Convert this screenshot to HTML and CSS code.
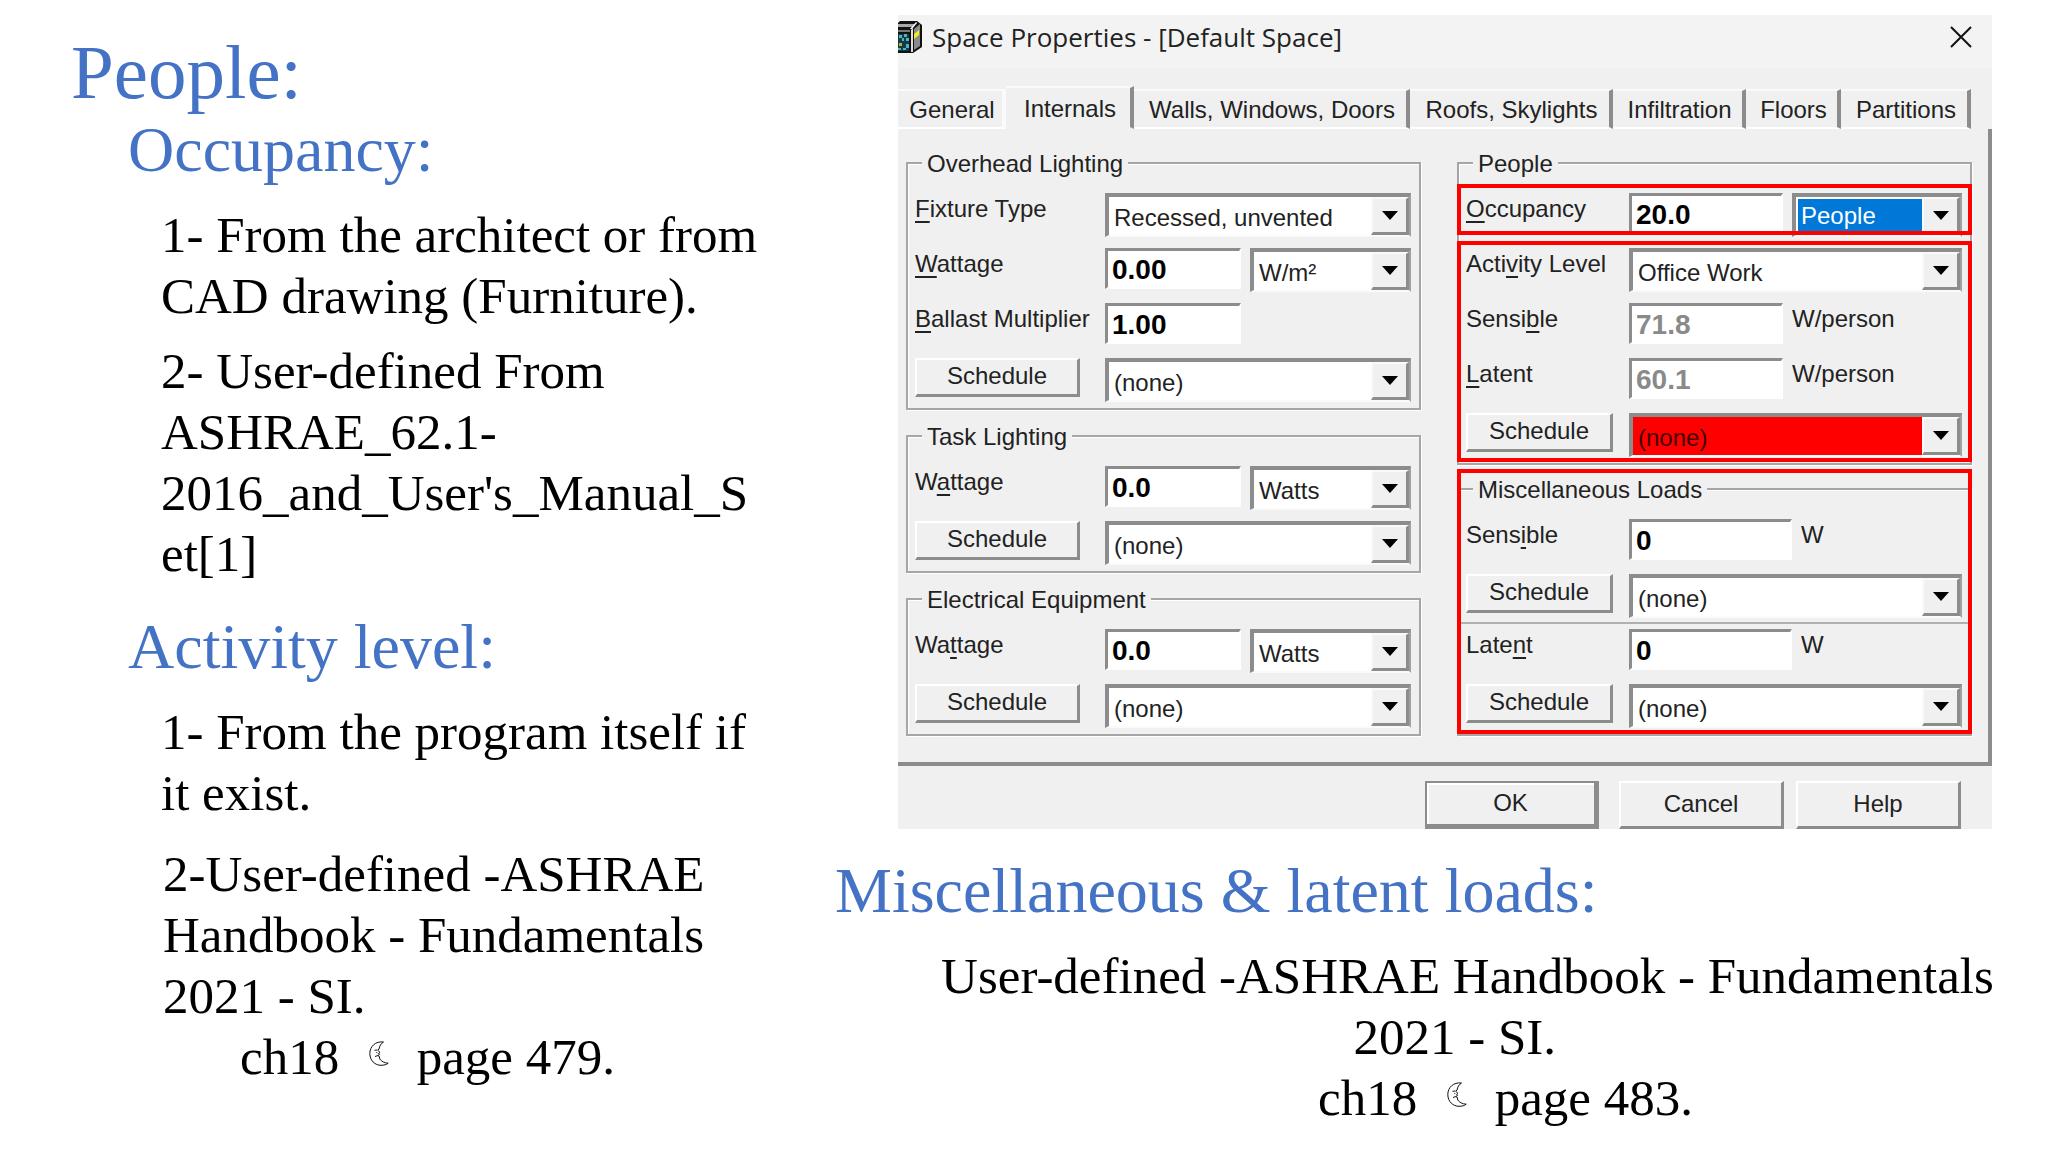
FILE: index.html
```html
<!DOCTYPE html>
<html lang="en">
<head>
    <meta charset="UTF-8">
    <meta name="viewport" content="width=device-width, initial-scale=1.0">
    <title>People and Miscellaneous Loads</title>
    <link rel="stylesheet" href="styles.css">
</head>
<body>
    <!-- Shared moon symbol -->
    <svg class="defs" width="0" height="0" aria-hidden="true">
        <symbol id="moon" viewBox="0 0 20 25">
            <path d="M14.500 1C6.500 0 .8 5.500 .8 12.500C.8 19.500 6 24.300 12 24.300C15 24.300 17.600 23.600 19.200 22.200C15.500 22 12.500 20.500 10.800 18L10.200 15.200L8.600 14.600L10.600 13.400L9.600 12.400L11 11.400L8.600 9.200L10 8.200C10.500 5 12 2.500 14.500 1Z M5.500 9.300L8 9 M6 15.500L8.600 14.600 M7.300 11.500L8.300 11.800" fill="none" stroke="#111" stroke-width="1"/>
        </symbol>
    </svg>

    <main class="slide">
        <section class="notes">
            <h1>People:</h1>
            <h2 class="indent">Occupancy:</h2>
            <p class="item">1- From the architect or from CAD drawing (Furniture).</p>
            <p class="item">2- User-defined From ASHRAE_62.1-<wbr>2016_and_User's_Manual_Set[1]</p>
            <h2 class="indent second">Activity level:</h2>
            <p class="item">1- From the program itself if it exist.</p>
            <p class="item source">2-User-defined -ASHRAE Handbook - Fundamentals 2021 - SI.</p>
            <p class="chapter">ch18 <svg class="moon" aria-hidden="true"><use href="#moon"/></svg> page 479.</p>
        </section>

        <section class="right">
            <!-- Space Properties dialog -->
            <div class="dialog" role="dialog" aria-labelledby="dialog-title">
                <div class="titlebar">
                    <svg class="app-icon" viewBox="0 0 24 32" aria-hidden="true">
                        <path d="M0 2L2 0H19L24 4V26L15 32H0Z" fill="#111"/>
                        <path d="M0 3H17L14 6H0Z" fill="#a8a8a8"/>
                        <path d="M0 9H12V11H0Z" fill="#777"/>
                        <path d="M0 13H11V30H0Z" fill="#123c48"/>
                        <path d="M1 14H4V17H1Z M6 13H9V16H6Z M8 17H11V20H8Z M4 17H6V20H4Z M8 23H11V27H8Z M0 27H3V29H0Z M5 27H8V29H5Z" fill="#4fb3c6"/>
                        <path d="M1 22H4V25H1Z" fill="#b9b52a"/>
                        <path d="M13 9L15 7V31H13Z" fill="#ddd"/>
                        <path d="M16 8L22 3V25L16 29Z" fill="#8a8a8a"/>
                        <path d="M16 13L21 9V14L16 18Z" fill="#f2ee1c"/>
                        <path d="M12 8L18 1L19 2L14 8Z" fill="#fff"/>
                    </svg>
                    <span id="dialog-title">Space Properties - [Default Space]</span>
                    <button class="close" aria-label="Close">
                        <svg viewBox="0 0 22 22" aria-hidden="true"><path d="M1 1L21 21M21 1L1 21" stroke="#111" stroke-width="2"/></svg>
                    </button>
                </div>

                <div class="tabs" role="tablist">
                    <button class="tab" role="tab">General</button>
                    <button class="tab active" role="tab" aria-selected="true">Internals</button>
                    <button class="tab" role="tab">Walls, Windows, Doors</button>
                    <button class="tab" role="tab">Roofs, Skylights</button>
                    <button class="tab" role="tab">Infiltration</button>
                    <button class="tab" role="tab">Floors</button>
                    <button class="tab" role="tab">Partitions</button>
                </div>

                <div class="pane">
                    <div class="column">
                        <fieldset>
                            <legend>Overhead Lighting</legend>
                            <div class="fields">
                                <label for="fixture"><u>F</u>ixture Type</label>
                                <div class="combo wide"><select id="fixture"><option>Recessed, unvented</option></select><span class="arrow"></span></div>

                                <label for="overhead-wattage"><u>W</u>attage</label>
                                <input type="text" id="overhead-wattage" value="0.00">
                                <div class="combo"><select aria-label="Wattage unit"><option>W/m²</option></select><span class="arrow"></span></div>

                                <label for="ballast"><u>B</u>allast Multiplier</label>
                                <input type="text" id="ballast" value="1.00">
                                <span></span>

                                <button class="btn">Schedule</button>
                                <div class="combo wide"><select aria-label="Overhead schedule"><option>(none)</option></select><span class="arrow"></span></div>
                            </div>
                        </fieldset>

                        <fieldset>
                            <legend>Task Lighting</legend>
                            <div class="fields">
                                <label for="task-wattage">W<u>a</u>ttage</label>
                                <input type="text" id="task-wattage" value="0.0">
                                <div class="combo"><select aria-label="Task unit"><option>Watts</option></select><span class="arrow"></span></div>

                                <button class="btn">Schedule</button>
                                <div class="combo wide"><select aria-label="Task schedule"><option>(none)</option></select><span class="arrow"></span></div>
                            </div>
                        </fieldset>

                        <fieldset>
                            <legend>Electrical Equipment</legend>
                            <div class="fields">
                                <label for="equipment-wattage">Wa<u>t</u>tage</label>
                                <input type="text" id="equipment-wattage" value="0.0">
                                <div class="combo"><select aria-label="Equipment unit"><option>Watts</option></select><span class="arrow"></span></div>

                                <button class="btn">Schedule</button>
                                <div class="combo wide"><select aria-label="Equipment schedule"><option>(none)</option></select><span class="arrow"></span></div>
                            </div>
                        </fieldset>
                    </div>

                    <div class="column marked">
                        <fieldset>
                            <legend>People</legend>
                            <div class="fields people">
                                <label for="occupancy"><u>O</u>ccupancy</label>
                                <input type="text" id="occupancy" value="20.0">
                                <div class="combo selected"><select aria-label="Occupancy unit"><option>People</option></select><span class="arrow"></span></div>

                                <label for="activity">Acti<u>v</u>ity Level</label>
                                <div class="combo wide"><select id="activity"><option>Office Work</option></select><span class="arrow"></span></div>

                                <label for="people-sensible">Sensi<u>b</u>le</label>
                                <input type="text" id="people-sensible" value="71.8" disabled>
                                <span>W/person</span>

                                <label for="people-latent"><u>L</u>atent</label>
                                <input type="text" id="people-latent" value="60.1" disabled>
                                <span>W/person</span>

                                <button class="btn">Schedule</button>
                                <div class="combo wide missing"><select aria-label="People schedule"><option>(none)</option></select><span class="arrow"></span></div>
                            </div>
                        </fieldset>

                        <fieldset>
                            <legend>Miscellaneous Loads</legend>
                            <div class="fields misc">
                                <label for="misc-sensible">Sens<u>i</u>ble</label>
                                <input type="text" id="misc-sensible" value="0">
                                <span>W</span>

                                <button class="btn">Schedule</button>
                                <div class="combo wide"><select aria-label="Sensible schedule"><option>(none)</option></select><span class="arrow"></span></div>
                            </div>
                            <hr>
                            <div class="fields misc">
                                <label for="misc-latent">Late<u>n</u>t</label>
                                <input type="text" id="misc-latent" value="0">
                                <span>W</span>

                                <button class="btn">Schedule</button>
                                <div class="combo wide"><select aria-label="Latent schedule"><option>(none)</option></select><span class="arrow"></span></div>
                            </div>
                        </fieldset>

                        <!-- Red marker boxes -->
                        <div class="marker marker-occupancy"></div>
                        <div class="marker marker-activity"></div>
                        <div class="marker marker-misc"></div>
                    </div>
                </div>

                <div class="footer">
                    <button class="btn default">OK</button>
                    <button class="btn">Cancel</button>
                    <button class="btn">Help</button>
                </div>
            </div>

            <h2 class="second">Miscellaneous &amp; latent loads:</h2>
            <div class="reference">
                <p>User-defined -ASHRAE Handbook - Fundamentals 2021 - SI.&nbsp;&nbsp;</p>
                <p class="chapter">ch18 <svg class="moon" aria-hidden="true"><use href="#moon"/></svg> page 483.</p>
            </div>
        </section>
    </main>
</body>
</html>
```

FILE: styles.css
```css
* {
    box-sizing: border-box;
}
body {
    margin: 0;
    background-color: #fff;
    color: #000;
    font-family: "Liberation Serif", "Times New Roman", serif;
    font-size: 51px;
    line-height: 61px;
}
h1, h2, p {
    margin: 0;
    font-weight: normal;
}
h1, h2 {
    color: #4472c4;
}
h1 {
    font-size: 77px;
    line-height: 84px;
}
h2 {
    font-size: 64px;
    line-height: 72px;
    margin-bottom: 19px;
}
.defs {
    position: absolute;
}
.slide {
    display: grid;
    grid-template-columns: 3fr 5fr;
    column-gap: 65px;
    padding: 0 48px 0 71px;
}

/* Notes */
.notes {
    padding: 30px 4px 0 0;
}
.indent {
    padding-left: 57px;
}
.second {
    margin-top: 26px;
}
.item {
    padding-left: 90px;
    margin-bottom: 14px;
    overflow-wrap: anywhere;
}
.item.source {
    padding-left: 92px;
    margin-top: 20px;
    margin-bottom: 0;
}
.chapter {
    padding-left: 169px;
}
.moon {
    width: 20px;
    height: 25px;
    margin: 0 15px 8px 17px;
}
.reference {
    padding-left: 100px;
    text-align: center;
}
.reference .chapter {
    padding-left: 76px;
}

/* Dialog */
.dialog {
    margin: 15px 8px 0 63px;
    background-color: #f0f0f0;
    color: #222;
    font-family: "Liberation Sans", Arial, sans-serif;
    font-size: 24px;
    line-height: 32px;
}
.dialog button,
.dialog input,
.dialog select {
    font-family: inherit;
    font-size: inherit;
    line-height: inherit;
    color: inherit;
    border-radius: 0;
    margin: 0;
}
.titlebar {
    display: flex;
    align-items: center;
    height: 53px;
    padding: 0 20px 10px 0;
    background-color: #f3f3f3;
    font-family: "Open Sans", "Noto Sans", sans-serif;
    font-size: 26px;
}
.app-icon {
    width: 24px;
    height: 32px;
    margin-right: 10px;
}
.dialog .close {
    margin-left: auto;
    padding: 0;
    border: none;
    background: none;
    width: 22px;
    height: 22px;
}
.close svg {
    display: block;
}
.tabs {
    display: grid;
    grid-template-columns: 108fr 128fr 276fr 203fr 133fr 95fr 130fr 21fr;
    align-items: end;
    height: 61px;
}
.tab {
    height: 40px;
    padding: 2px 0 0 4px;
    border: none;
    border-top: 2px solid #fafafa;
    border-right: 4px solid #8c8c8c;
    border-bottom: 2px solid #fff;
    background-color: #f0f0f0;
    white-space: nowrap;
}
.tab:first-child {
    border-right-color: #fafafa;
}
.tab.active {
    height: 43px;
    border-bottom-color: #f0f0f0;
}
.pane {
    display: grid;
    grid-template-columns: 1fr 1fr;
    column-gap: 36px;
    padding: 20px 16px 26px 8px;
    border-right: 4px solid #8c8c8c;
    border-bottom: 4px solid #8c8c8c;
}
.column {
    display: flex;
    flex-direction: column;
    justify-content: space-between;
    gap: 10px;
}
.marked {
    position: relative;
}
fieldset {
    margin: 0;
    min-width: 0;
    padding: 16px 8px 6px 7px;
    border: 2px solid #a6a6a6;
    box-shadow: 1px 1px 0 #fff, inset 1px 1px 0 #fff;
}
legend {
    height: 28px;
    line-height: 30px;
    margin-left: 7px;
    padding: 0 5px;
    background-color: #f0f0f0;
}
.fields {
    display: grid;
    grid-template-columns: 181px 136fr 161fr;
    grid-auto-rows: 44px;
    gap: 11px 9px;
    align-items: start;
}
.fields.people {
    grid-template-columns: 154px 154fr 170fr;
}
.fields.misc {
    grid-template-columns: 154px 163fr 161fr;
}
.fields label {
    white-space: nowrap;
}
.fields u {
    text-underline-offset: 4px;
    text-decoration-thickness: 2px;
}
.dialog input {
    width: 100%;
    height: 41px;
    padding: 1px 4px 0;
    border: 3px solid #8c8c8c;
    border-right: 2px solid #fff;
    border-bottom: 2px solid #fff;
    background-color: #fff;
    color: #000;
    font-size: 28px;
    font-weight: bold;
}
.dialog input:disabled {
    color: #8a8a8a;
}
.combo {
    display: grid;
    height: 44px;
    border: 4px solid #8c8c8c;
    border-right: 2px solid #a0a0a0;
    border-bottom: 2px solid #fafafa;
    background-color: #fff;
}
.combo.wide {
    grid-column: span 2;
}
.combo select {
    grid-area: 1 / 1;
    width: 100%;
    height: 38px;
    appearance: none;
    border: none;
    padding: 3px 40px 0 5px;
    background-color: #fff;
}
.combo.selected select {
    background-color: #0078d7;
    color: #fff;
    border: 2px solid #fff;
    padding: 0 40px 0 3px;
}
.combo.missing select {
    background-color: #f00;
    color: #400;
}
.arrow {
    grid-area: 1 / 1;
    justify-self: end;
    display: flex;
    align-items: center;
    justify-content: center;
    width: 38px;
    height: 38px;
    border: 2px solid #fafafa;
    border-right: 3px solid #8c8c8c;
    border-bottom: 3px solid #8c8c8c;
    background-color: #f0f0f0;
    pointer-events: none;
}
.arrow::after {
    content: "";
    border: 8px solid transparent;
    border-top: 9px solid #000;
    border-bottom: none;
}
.btn {
    width: 165px;
    height: 39px;
    padding: 0 0 2px;
    border: 2px solid #fff;
    border-right: 3px solid #8c8c8c;
    border-bottom: 3px solid #8c8c8c;
    background-color: #f0f0f0;
}
.people .btn,
.misc .btn {
    width: 147px;
}
hr {
    height: 2px;
    margin: 4px -8px 5px -7px;
    border: none;
    background-color: #b0b0b0;
}
.marker {
    position: absolute;
    left: 0;
    right: 0;
    border: 4px solid #f00;
    pointer-events: none;
}
.marker-occupancy {
    top: 35px;
    height: 51px;
}
.marker-activity {
    top: 92px;
    height: 221px;
}
.marker-misc {
    top: 320px;
    height: 265px;
}
.footer {
    display: flex;
    justify-content: flex-end;
    gap: 12px;
    padding: 15px 31px 0 0;
}
.footer .btn {
    height: 48px;
}
.footer .default {
    width: 174px;
    margin-right: 8px;
    border: 2px solid #8c8c8c;
    border-right-width: 5px;
    border-bottom-width: 5px;
    box-shadow: inset 2px 2px 0 #fff;
}
```
